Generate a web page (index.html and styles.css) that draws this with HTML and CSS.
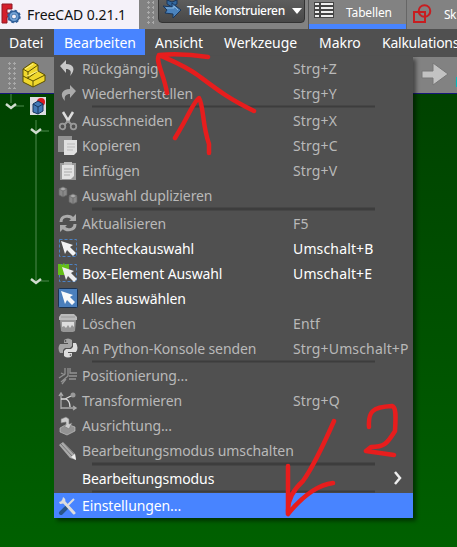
FILE: index.html
```
<!DOCTYPE html>
<html lang="de">
<head>
<meta charset="utf-8">
<title>FreeCAD 0.21.1</title>
<link rel="stylesheet" href="styles.css">
</head>
<body>
<div class="window">
  <header class="top">
    <div class="title">
      <svg width="20" height="22" viewBox="0 0 20 22"><path d="M1 1h10v5H6v4h4v4H6v6H1z" fill="#d51f2b" stroke="#8e1824"/><circle cx="13" cy="13.500" r="4" fill="none" stroke="#315f99" stroke-width="4"/><circle cx="13" cy="13.500" r="5.500" fill="none" stroke="#315f99" stroke-width="2.500" stroke-dasharray="2.300 2"/><circle cx="13" cy="13.500" r="3.500" fill="none" stroke="#6f9fd2" stroke-width="2"/></svg>
      <span>FreeCAD 0.21.1</span>
    </div>
    <div class="grip"></div>
    <div class="combo">
      <svg width="20" height="20" viewBox="0 0 20 20"><path d="M5 0l5 2 5-2v4l-5 3-5-3z" fill="#32689f" stroke="#19375d"/><path d="M1 6l9 1V3l9 7-8 8v-4l-8-1 2-3z" fill="#4b83bd" stroke="#19375d"/><path d="M4 8h8V6l4 4" fill="none" stroke="#8ab8df"/></svg>
      <span>Teile Konstruieren</span><i class="down"></i>
    </div>
    <div class="tab active">
      <svg width="20" height="16" viewBox="0 0 20 16"><path d="M0 0h20v16H0z" fill="#444"/><path d="M1 1h4v2H1zM7 1h12v2H7zM1 5h4v2H1zM7 5h12v2H7zM1 9h4v2H1zM7 9h12v2H7zM1 13h4v2H1zM7 13h12v2H7z" fill="#eee"/></svg>
      <span>Tabellen</span>
    </div>
    <div class="tab sketch">
      <svg width="20" height="20" viewBox="0 0 20 20" fill="none" stroke="#c81d20" stroke-width="2"><circle cx="12.500" cy="7" r="5.800"/><path d="M2 8h11v10H2z"/></svg>
      <span>Sk</span>
    </div>
  </header>
  <nav class="menubar"><span class="m1">Datei</span><span class="m2">Bearbeiten</span><span class="m3">Ansicht</span><span class="m4">Werkzeuge</span><span class="m5">Makro</span><span class="m6">Kalkulations</span></nav>
  <main class="work">
    <aside class="left">
      <div class="tools"><div class="grip small"></div>
        <svg width="24" height="27" viewBox="0 0 24 27" fill="#f0d82d" stroke="#5b5000" stroke-linejoin="round"><path d="M1 8l10-7 5 3v6l7 4v6l-12 6-10-5z"/><path d="M1 8l5 3 10-7M6 11v7M1 15l10 5 12-6M11 20v6M6 17l10-7" fill="none"/><path d="M3 8l8-5M5 15l11-5" stroke="#fff489"/></svg>
      </div>
      <svg class="tree" width="54" height="453" viewBox="0 0 54 453"><path d="M11 0v9M15 12h9M36 26v162M40 37h9M40 187h9" stroke="#347434" stroke-width="1.500" fill="none"/><path d="M6 10l5 4 5-4M31 35l5 4 5-4M31 185l5 4 5-4" fill="none" stroke="#d0dccf" stroke-width="2.500"/><path d="M30 3h16v18H30z" fill="#dcdde2"/><circle cx="41" cy="8" r="4" fill="#d91820"/><path d="M33 10l5-3 5 3v7l-5 3-5-2z" fill="#4479b6" stroke="#16365f"/><path d="M33 10l5 3 5-3M38 13v7" fill="none" stroke="#16365f"/></svg>
    </aside>
    <section class="menu">
      <div class="row off"><svg viewBox="0 0 20 20"><path d="M2 8l6-6v4c8 0 10 6 4 12 2-5 0-7-4-7v4z" fill="#c9c9c9"/></svg><span>Rückgängig</span><kbd>Strg+Z</kbd></div>
      <div class="row off"><svg viewBox="0 0 20 20"><path d="M18 8l-6-6v4c-8 0-11 6-5 12-1-5 1-7 5-7v4z" fill="#aaa"/></svg><span>Wiederherstellen</span><kbd>Strg+Y</kbd></div>
      <hr>
      <div class="row off"><svg viewBox="0 0 20 20"><path d="M5 1l6 10M15 1L9 11" stroke="#ddd" stroke-width="2.500"/><path d="M10 10l-4 4M10 10l4 4" stroke="#999" stroke-width="2"/><circle cx="4.500" cy="15.500" r="2.800" fill="none" stroke="#999" stroke-width="1.800"/><circle cx="15.500" cy="15.500" r="2.800" fill="none" stroke="#999" stroke-width="1.800"/></svg><span>Ausschneiden</span><kbd>Strg+X</kbd></div>
      <div class="row off"><svg viewBox="0 0 20 20"><path d="M0 0h14v16H0z" fill="#929292"/><path d="M6 4h13v12l-3 3H6z" fill="#e0e0e0"/><path d="M9 8h8M9 11h8M9 14h6" stroke="#bbb"/></svg><span>Kopieren</span><kbd>Strg+C</kbd></div>
      <div class="row off"><svg viewBox="0 0 20 20"><path d="M2 2h16v17H2z" fill="#999"/><path d="M4 4h12v11l-3 3H4z" fill="#e2e2e2"/><path d="M6 1h8v3H6z" fill="#bbb"/><path d="M6 8h8M6 11h8M6 14h6" stroke="#aaa"/></svg><span>Einfügen</span><kbd>Strg+V</kbd></div>
      <div class="row off"><svg viewBox="0 0 20 20" fill="#888" stroke="#666" stroke-width=".7"><path d="M1 3l4-2 4 2v6l-4 2-4-2zM11 10l4-2 4 2v6l-4 2-4-2z"/><path d="M1 3l4 2 4-2-4-2zM11 10l4 2 4-2-4-2z" fill="#aaa"/><path d="M5 5v6M15 12v6"/></svg><span>Auswahl duplizieren</span></div>
      <hr>
      <div class="row off"><svg viewBox="0 0 20 20" fill="none" stroke="#aaa" stroke-width="3"><path d="M3 9c0-7 9-7 12-3M17 11c0 7-9 7-12 3"/><path d="M18 1v7h-7zM2 19v-7h7z" fill="#aaa" stroke="none"/></svg><span>Aktualisieren</span><kbd>F5</kbd></div>
      <div class="row"><svg viewBox="0 0 20 20"><path d="M1.500 1.500h17v17h-17z" fill="none" stroke="#4c82c4" stroke-dasharray="3 2"/><path d="M3 3l12 4-3 2 6 6-3 3-6-6-2 4z" fill="#f4f4f4"/></svg><span>Rechteckauswahl</span><kbd>Umschalt+B</kbd></div>
      <div class="row"><svg viewBox="0 0 20 20"><path d="M1.500 1.500h17v17h-17z" fill="none" stroke="#4c82c4" stroke-dasharray="3 2"/><path d="M0 1h3l1 1 2-2 1 2 2-1h2v9H8v2H0z" fill="#65bf18"/><path d="M4 4l12 4-3 2 6 6-3 3-6-6-2 4z" fill="#eee"/></svg><span>Box-Element Auswahl</span><kbd>Umschalt+E</kbd></div>
      <div class="row"><svg viewBox="0 0 20 20"><rect x=".5" y=".5" width="19" height="19" rx="1" fill="#4b7fbc" stroke="#1b3352"/><path d="M3 3l12 4-3 2 5 5-3 3-5-5-2 4z" fill="#fafafa"/></svg><span>Alles auswählen</span></div>
      <div class="row off"><svg viewBox="0 0 20 20"><path d="M3 1h13l3 3v3H1V4z" fill="#bbb"/><path d="M2 7h16l-1 11-2 1H5l-2-1z" fill="#969696"/><path d="M4 9h12v5l-2-2-2 3-2-3-2 3-2-2-2 1z" fill="#ddd"/><path d="M3 4h14" stroke="#999"/></svg><span>Löschen</span><kbd>Entf</kbd></div>
      <div class="row off"><svg viewBox="0 0 20 20"><path d="M6 5V2q4-3 8 0v6l-2 2H7l-2 2v3H2q-3-5 0-9h8V5z" fill="#a5a5a5"/><path d="M14 15v3q-4 3-8 0v-5l2-2h5l2-2V5h3q3 5 0 9h-8v1z" fill="#ddd"/><circle cx="7.500" cy="3" r=".9" fill="#555"/><circle cx="12.500" cy="17" r=".9" fill="#777"/></svg><span>An Python-Konsole senden</span><kbd>Strg+Umschalt+P</kbd></div>
      <hr>
      <div class="row off"><svg viewBox="0 0 20 20" fill="none" stroke="#929292" stroke-width="1.300"><path d="M7 2v6l-6 4M10 2v8l-7 6M12 2v5h7M11 10h8M11 13h7M8 13l-4 5M3 7l4 2"/></svg><span>Positionierung...</span></div>
      <div class="row off"><svg viewBox="0 0 20 20" fill="none" stroke="#aaa" stroke-width="1.300"><path d="M3 18V3M1 5l2-3 2 3M3 17h14M15 15l3 2-3 2"/><path d="M3 8h5q4 2 4 8M7 8l6-3" stroke="#ddd"/><circle cx="15" cy="4" r="2.500" fill="#999" stroke="none"/></svg><span>Transformieren</span><kbd>Strg+Q</kbd></div>
      <div class="row off"><svg viewBox="0 0 20 20"><path d="M2 12l7-4 8 3v4l-8 4-7-3z" fill="#929292" stroke="#ccc" stroke-width=".6"/><path d="M3 3l5-2 3 2v5l3-1-3 6-5-3 2-1V6L3 7z" fill="#ccc" stroke="#777" stroke-width=".6"/></svg><span>Ausrichtung...</span></div>
      <div class="row off"><svg viewBox="0 0 20 20"><path d="M1 4l4-3 12 12 1 6-6-2z" fill="#aaa"/><path d="M3 3l11 12M5 1l11 12" stroke="#777"/><path d="M13 16l4-3 1 6z" fill="#eee"/></svg><span>Bearbeitungsmodus umschalten</span></div>
      <hr>
      <div class="row"><svg viewBox="0 0 20 20"></svg><span>Bearbeitungsmodus</span><svg class="chevron" viewBox="0 0 10 14"><path d="M2 1l5 6-5 6" fill="none" stroke="#eee" stroke-width="2.500"/></svg></div>
      <hr>
      <div class="row chosen"><svg viewBox="0 0 20 20"><path d="M16 3L7 12" stroke="#ddd" stroke-width="2"/><path d="M9 11l-6 6" stroke="#285488" stroke-width="4" stroke-linecap="round"/><path d="M5 5l11 12" stroke="#ddd" stroke-width="3" stroke-linecap="round"/><path d="M5 1c4 2 3 7-3 7L1 6l3-1z" fill="#ddd"/></svg><span>Einstellungen...</span></div>
    </section>
    <aside class="right"><div class="tools"><svg width="44" height="36" viewBox="0 0 44 36"><path d="M9 14h11V6l15 11-15 11v-7H9z" fill="#c2c2c2" stroke="#777"/><path d="M43 20h1v10h-1z" fill="#00b8bb"/></svg></div></aside>
  </main>
  <svg class="marks" width="457" height="547" viewBox="0 0 457 547"><path d="M208 57Q182 53 159 55C170 60 184 65 199 76C219 91 228 98 254 111M167 93C164 74 155 61 159 55M175 138C190 114 193 102 199 98C204 107 202 124 209 144V153M334 421C323 446 313 467 303 481C293 490 287 502 288 514V466M288 514C301 498 317 485 333 483M369 427C368 412 372 407 392 406C396 407 396 415 395 431C387 444 384 447 371 447L366 451L394 455"/></svg>
</div>
</body>
</html>
```
FILE: styles.css
```
* { box-sizing: border-box; }
body { margin: 0; font-family: "Noto Sans", sans-serif; font-size: 14px; color: #fff; }
svg { display: block; flex: none; }
.window { position: relative; width: 457px; height: 547px; overflow: hidden; background: #505050; }
.top { display: flex; height: 29px; background: #828282; white-space: nowrap; overflow: hidden; }
.top > div { flex: none; }
.title { display: flex; align-items: center; gap: 6px; width: 139px; padding-left: 1px; background: #f4f1f9; color: #111; letter-spacing: -.05px; }
.title svg { margin-top: -2px; }
.grip { width: 8px; height: 26px; margin-left: 7px; background: radial-gradient(circle, #aaa 1px, transparent 1.3px) 0 0 / 5px 5px; }
.combo { display: flex; align-items: center; width: 147px; height: 27px; margin-top: -4px; margin-left: 4px; padding-left: 3px; gap: 5px; border: 1px solid #333; border-radius: 4px; background: linear-gradient(#606060, #484848); font-size: 12px; font-weight: 500; }
.combo span { width: 103px; padding-top: 2px; letter-spacing: -.35px; }
.down { margin-left: -3px; margin-top: 3px; border: 5px solid transparent; border-top: 6px solid #fff; border-bottom: 0; flex: none; }
.tab { display: flex; align-items: center; font-size: 12px; }
.active { width: 99px; margin-left: 3px; padding: 0 0 5px 5px; gap: 12px; border-left: 1px solid #555; border-right: 1px solid #666; background: linear-gradient(#828282 24px, #4884ff 24px); letter-spacing: -.15px; }
.active svg { margin-top: -4px; }
.sketch { padding-left: 5px; gap: 12px; }
.sketch svg { margin-top: -2px; }
.sketch span { width: 13px; overflow: hidden; letter-spacing: -.5px; }
.menubar { display: flex; height: 28px; line-height: 27px; background: #505050; white-space: nowrap; letter-spacing: -.05px; }
.menubar span { flex: none; }
.m1 { width: 54px; padding-left: 9px; }
.m2 { width: 91px; height: 26px; padding-left: 10px; background: #4884ff; }
.m3 { width: 79px; padding-left: 10px; }
.m4 { width: 95px; }
.m5 { width: 63px; }
.menubar .m6 { letter-spacing: -.25px; }
.work { display: flex; height: 490px; background: linear-gradient(#004000, #006000); }
.left { width: 54px; }
.tools { display: flex; height: 37px; background: #828282; border-bottom: 1px solid #17177a; }
.left .tools { padding-top: 4px; }
.small { width: 10px; height: 28px; margin-right: 5px; }
.menu { width: 359px; height: 462.500px; margin-top: -1.500px; background: #505050; box-shadow: 3px 3px 4px #0007; clip-path: inset(0 -8px -8px 0); }
.row { display: flex; align-items: center; height: 25px; padding-left: 4px; line-height: 25px; white-space: nowrap; }
.row > svg { width: 20px; height: 20px; }
.row > span { width: 211px; margin-left: 4px; letter-spacing: -.1px; }
.row > kbd { font: inherit; letter-spacing: .15px; }
.row .chevron { width: 10px; height: 14px; margin-left: 100px; }
.off { color: #b9b9b9; }
.chosen { background: #4884ff; }
hr { height: 2.500px; margin: 0 38px; border: 0; background: #3d3d3d; transform: translateY(-.5px); }
.right { flex: 1; }
.marks { position: absolute; inset: 0; }
.marks path { fill: none; stroke: #e71d1d; stroke-width: 4.500px; stroke-linecap: round; stroke-linejoin: round; }
```
